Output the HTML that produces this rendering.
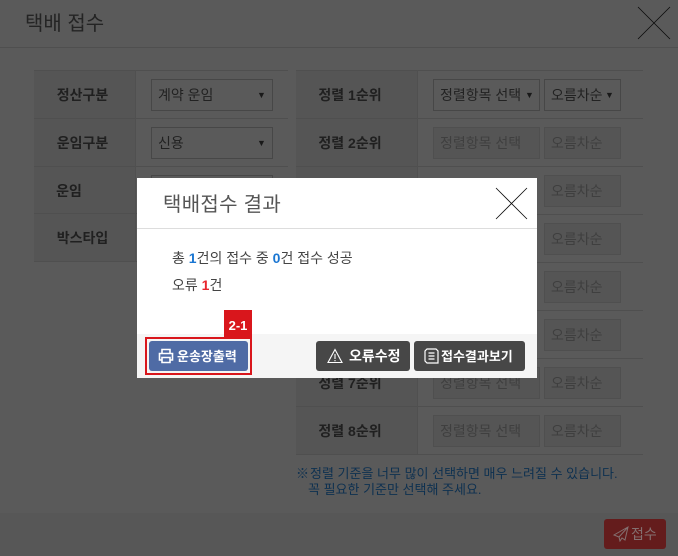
<!DOCTYPE html>
<html lang="ko"><head><meta charset="utf-8"><style>
*{box-sizing:border-box;margin:0;padding:0}
html,body{width:678px;height:556px;overflow:hidden;background:#5a5a5a}
body{position:relative;font-family:"Liberation Sans","Noto Sans CJK KR",sans-serif;font-size:14px;color:#333}
.a{position:absolute;white-space:nowrap}
.l{background:#555}
.h{height:1px;background:#4f4f4f}
.v{width:1px;background:#505050}
.s{height:32px;border:1px solid #474747;line-height:30px;font-size:14px;color:#222;padding-left:6px}
.d{border-color:#4f4f4f;background:#555;color:#3f3f3f}
.lab{font-size:14px;font-weight:bold;color:#202020;text-align:center;height:20px;line-height:20px}
.ar{position:absolute;font-size:9px;color:#191919;top:9px;line-height:12px}
.btn{border-radius:3px;color:#fff;font-size:13px;height:30px;line-height:31px;font-weight:bold}
</style></head><body>
<div class="a" style="left:25px;top:9px;font-size:20px;line-height:30px;color:#242424">택배 접수</div>
<div class="a h" style="left:0;top:47px;width:678px"></div>
<svg class="a" style="left:637px;top:6px" width="34" height="34"><path d="M1 1L33 33M33 1L1 33" stroke="#0a0a0a" stroke-width=".8" fill="none"/></svg>

<div class="a l" style="left:34px;top:70px;width:102px;height:192px"></div>
<div class="a l" style="left:296px;top:70px;width:121px;height:384px"></div>
<div class="a h" style="left:34px;top:70px;width:254px"></div>
<div class="a h" style="left:34px;top:118px;width:254px"></div>
<div class="a h" style="left:34px;top:166px;width:254px"></div>
<div class="a h" style="left:34px;top:213px;width:254px"></div>
<div class="a h" style="left:34px;top:261px;width:254px"></div>
<div class="a v" style="left:135px;top:70px;height:192px"></div>
<div class="a h" style="left:296px;top:70px;width:347px"></div>
<div class="a h" style="left:296px;top:118px;width:347px"></div>
<div class="a h" style="left:296px;top:166px;width:347px"></div>
<div class="a h" style="left:296px;top:214px;width:347px"></div>
<div class="a h" style="left:296px;top:262px;width:347px"></div>
<div class="a h" style="left:296px;top:310px;width:347px"></div>
<div class="a h" style="left:296px;top:358px;width:347px"></div>
<div class="a h" style="left:296px;top:406px;width:347px"></div>
<div class="a h" style="left:296px;top:454px;width:347px"></div>
<div class="a v" style="left:417px;top:70px;height:384px"></div>

<div class="a lab" style="left:34px;top:85px;width:97px">정산구분</div>
<div class="a lab" style="left:34px;top:133px;width:97px">운임구분</div>
<div class="a lab" style="left:34px;top:181px;width:70px">운임</div>
<div class="a lab" style="left:34px;top:228px;width:97px">박스타입</div>

<div class="a s" style="left:151px;top:79px;width:122px">계약 운임<span class="ar" style="left:105px">▼</span></div>
<div class="a s" style="left:151px;top:127px;width:122px">신용<span class="ar" style="left:105px">▼</span></div>
<div class="a s" style="left:151px;top:175px;width:122px"></div>

<div class="a lab" style="left:296px;top:85px;width:108px">정렬 1순위</div>
<div class="a lab" style="left:296px;top:133px;width:108px">정렬 2순위</div>
<div class="a lab" style="left:296px;top:373px;width:108px">정렬 7순위</div>
<div class="a lab" style="left:296px;top:421px;width:108px">정렬 8순위</div>

<div class="a s" style="left:433px;top:79px;width:107px">정렬항목 선택<span class="ar" style="left:91px">▼</span></div>
<div class="a s" style="left:544px;top:79px;width:77px">오름차순<span class="ar" style="left:60px">▼</span></div>
<div class="a s d" style="left:433px;top:127px;width:107px">정렬항목 선택</div>
<div class="a s d" style="left:544px;top:127px;width:77px">오름차순</div>
<div class="a s d" style="left:544px;top:175px;width:77px">오름차순</div>
<div class="a s d" style="left:544px;top:223px;width:77px">오름차순</div>
<div class="a s d" style="left:544px;top:271px;width:77px">오름차순</div>
<div class="a s d" style="left:544px;top:319px;width:77px">오름차순</div>
<div class="a s d" style="left:433px;top:367px;width:107px">정렬항목 선택</div>
<div class="a s d" style="left:544px;top:367px;width:77px">오름차순</div>
<div class="a s d" style="left:433px;top:415px;width:107px">정렬항목 선택</div>
<div class="a s d" style="left:544px;top:415px;width:77px">오름차순</div>

<div class="a" style="left:296px;top:466px;font-size:13px;line-height:16px;color:#0d3050">※<span style="margin-left:1px">정렬 기준을 너무 많이 선택하면 매우 느려질 수 있습니다.</span><br><span style="margin-left:12px">꼭 필요한 기준만 선택해 주세요.</span></div>

<div class="a" style="left:0;top:513px;width:678px;height:43px;background:#575757"></div>
<div class="a" style="left:604px;top:519px;width:62px;height:30px;background:#641c1c;border-radius:3px;color:#847070;font-size:14px;line-height:30px;padding-left:27px">접수</div>
<svg class="a" style="left:613px;top:526px" width="16" height="16"><path d="M15 1L1 9l5 2 1 4 2-3 3 2zM15 1L6 11" stroke="#847070" stroke-width="1" fill="none"/></svg>

<div class="a" style="left:137px;top:178px;width:400px;height:200px;background:#fff"></div>
<div class="a" style="left:163px;top:191px;font-size:20px;line-height:28px;color:#555;letter-spacing:.3px">택배접수 결과</div>
<div class="a" style="left:137px;top:228px;width:400px;height:1px;background:#ddd"></div>
<svg class="a" style="left:495px;top:187px" width="33" height="33"><path d="M1 1L32 32M32 1L1 32" stroke="#0c0c0c" stroke-width=".8" fill="none"/></svg>
<div class="a" style="left:172px;top:248px;font-size:14px;line-height:20px;color:#444">총 <b style="color:#1a76d2">1</b>건의 접수 중 <b style="color:#1a76d2">0</b>건 접수 성공</div>
<div class="a" style="left:172px;top:275px;font-size:14px;line-height:20px;color:#444">오류 <b style="color:#e8262d">1</b>건</div>

<div class="a" style="left:137px;top:334px;width:400px;height:44px;background:#f5f5f5"></div>
<div class="a" style="left:224px;top:310px;width:28px;height:27px;background:#d9161c;color:#fff;font-size:13px;font-weight:bold;line-height:31px;text-align:center">2-1</div>
<div class="a" style="left:145px;top:337px;width:107px;height:38px;border:2px solid #d9161c"></div>
<div class="a btn" style="left:149px;top:341px;width:99px;background:#4f6ba5;padding-left:28px;font-weight:bold">운송장출력</div>
<svg class="a" style="left:158px;top:348px" width="16" height="16" fill="none" stroke="#fff" stroke-width="1.6"><path d="M4 5V1.5h8V5M4 12H1.5V5.5h13V12H12M4 9.5h8V14.5H4z"/></svg>
<div class="a btn" style="left:316px;top:341px;width:94px;background:#474747;padding-left:33px;font-size:14px">오류수정</div>
<svg class="a" style="left:327px;top:348px" width="16" height="16" fill="none" stroke="#fff" stroke-width="1.1"><path d="M8 1.5L15 14.5H1zM8 6v5M8 12v1.2"/></svg>
<div class="a btn" style="left:414px;top:341px;width:111px;background:#474747;padding-left:27px">접수결과보기</div>
<svg class="a" style="left:424px;top:348px" width="15" height="16" fill="none" stroke="#fff" stroke-width="1.2"><path d="M3 1h9l2 2v12H3L1 13V3zM4.5 5h6M4.5 8h6M4.5 11h6"/></svg>
</body></html>
